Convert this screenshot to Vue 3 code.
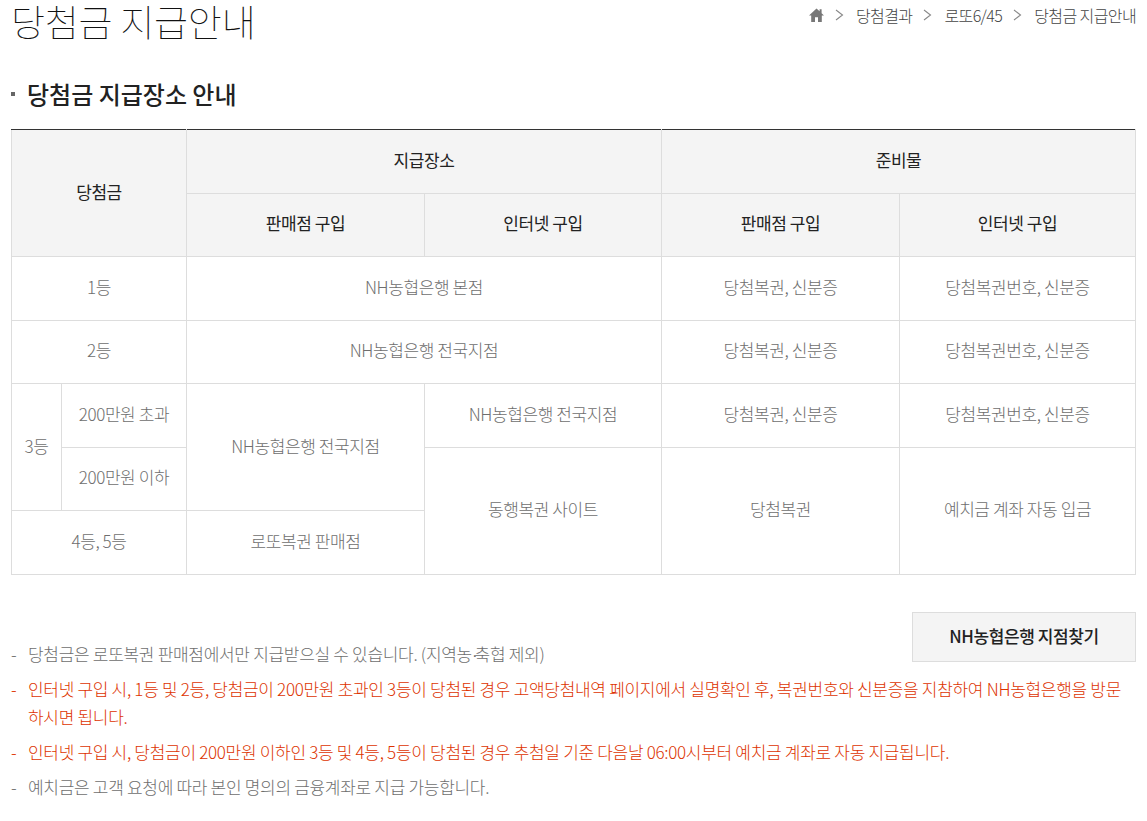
<script setup>
const notes = [
  { text: '당첨금은 로또복권 판매점에서만 지급받으실 수 있습니다. (지역농', tail: '축협 제외)' },
  { text: '인터넷 구입 시, 1등 및 2등, 당첨금이 200만원 초과인 3등이 당첨된 경우 고액당첨내역 페이지에서 실명확인 후, 복권번호와 신분증을 지참하여 NH농협은행을 방문하시면 됩니다.', red: true },
  { text: '인터넷 구입 시, 당첨금이 200만원 이하인 3등 및 4등, 5등이 당첨된 경우 추첨일 기준 다음날 06:00시부터 예치금 계좌로 자동 지급됩니다.', red: true },
  { text: '예치금은 고객 요청에 따라 본인 명의의 금융계좌로 지급 가능합니다.' },
]
</script>

<template>
  <div class="page">
    <header class="head">
      <h2 class="title">당첨금 지급안내</h2>
      <nav class="crumbs">
        <svg class="home" width="15" height="14" viewBox="0 0 15 14"><path d="M7.5 0.5 0 7.5h2.2V14h3.8V9.2h3V14h3.8V7.5H15L12.6 5.2V1.2h-2v2.1z" fill="#777"/></svg>
        <svg class="chev" width="9" height="12" viewBox="0 0 9 12"><path d="M1 1l6.5 5L1 11" fill="none" stroke="#888" stroke-width="1.1"/></svg>
        <span>당첨결과</span>
        <svg class="chev" width="9" height="12" viewBox="0 0 9 12"><path d="M1 1l6.5 5L1 11" fill="none" stroke="#888" stroke-width="1.1"/></svg>
        <span>로또6/45</span>
        <svg class="chev" width="9" height="12" viewBox="0 0 9 12"><path d="M1 1l6.5 5L1 11" fill="none" stroke="#888" stroke-width="1.1"/></svg>
        <span>당첨금 지급안내</span>
      </nav>
    </header>

    <h3 class="sub"><i class="dot"></i>당첨금 지급장소 안내</h3>

    <table class="tbl">
      <colgroup>
        <col style="width:50px" /><col style="width:125px" /><col style="width:238px" /><col style="width:237px" /><col style="width:238px" /><col />
      </colgroup>
      <thead>
        <tr><th colspan="2" rowspan="2">당첨금</th><th colspan="2">지급장소</th><th colspan="2">준비물</th></tr>
        <tr><th>판매점 구입</th><th>인터넷 구입</th><th>판매점 구입</th><th>인터넷 구입</th></tr>
      </thead>
      <tbody>
        <tr><td colspan="2">1등</td><td colspan="2">NH농협은행 본점</td><td>당첨복권, 신분증</td><td>당첨복권번호, 신분증</td></tr>
        <tr><td colspan="2">2등</td><td colspan="2">NH농협은행 전국지점</td><td>당첨복권, 신분증</td><td>당첨복권번호, 신분증</td></tr>
        <tr><td rowspan="2">3등</td><td>200만원 초과</td><td rowspan="2">NH농협은행 전국지점</td><td>NH농협은행 전국지점</td><td>당첨복권, 신분증</td><td>당첨복권번호, 신분증</td></tr>
        <tr><td>200만원 이하</td><td rowspan="2">동행복권 사이트</td><td rowspan="2">당첨복권</td><td rowspan="2">예치금 계좌 자동 입금</td></tr>
        <tr><td colspan="2">4등, 5등</td><td>로또복권 판매점</td></tr>
      </tbody>
    </table>

    <div class="bottom">
      <a class="btn">NH농협은행 지점찾기</a>
      <ul class="notes">
        <li v-for="n in notes" :key="n.text" :class="{ red: n.red }">{{ n.text }}<span v-if="n.tail" class="mid">·</span>{{ n.tail }}</li>
      </ul>
    </div>
  </div>
</template>

<style>
html, body { background: #fff; }
</style>

<style scoped>
.page {
  width: 1125px;
  margin-left: 11px;
  font-family: "Noto Sans CJK KR", "Noto Sans", sans-serif;
  font-size: 17px;
  font-weight: 300;
  letter-spacing: -0.4px;
  color: #6e6e6e;
}
.head { display: flex; justify-content: space-between; align-items: flex-start; height: 48px; }
.title {
  margin: 0;
  font-size: 37px;
  line-height: 42px;
  font-weight: 100;
  letter-spacing: -0.25px;
  color: #111;
}
.crumbs {
  display: flex;
  align-items: center;
  height: 30px;
  font-size: 16px;
  color: #444;
  letter-spacing: -0.6px;
  font-weight: 300;
}
.home { margin-right: 11px; }
.chev { margin-right: 12px; }
.crumbs span + .chev { margin-left: 11px; }
.sub {
  display: flex;
  align-items: center;
  margin: 28px 0 0;
  height: 36px;
  font-size: 24px;
  line-height: 36px;
  font-weight: 500;
  letter-spacing: 0;
  color: #222;
}
.dot { width: 4px; height: 4px; background: #666; margin-right: 12px; }
.tbl {
  width: 1125px;
  margin-top: 17px;
  border-collapse: collapse;
  table-layout: fixed;
  border-top: 1px solid #333;
}
.tbl th, .tbl td {
  border: 1px solid #ddd;
  padding: 0 0 3px;
  text-align: center;
  height: 59.5px;
  line-height: 24px;
}
.tbl thead tr:first-child th { border-top: 1px solid #333; }
.tbl th {
  background: #f4f4f4;
  font-weight: 400;
  color: #222;
}
.bottom { margin-top: 37px; }
.btn {
  float: right;
  box-sizing: border-box;
  width: 224px;
  height: 50px;
  line-height: 46px;
  text-align: center;
  background: #f4f4f4;
  border: 1px solid #ddd;
  font-weight: 500;
  color: #222;
}
.notes { list-style: none; margin: 0; padding: 28px 0 0; letter-spacing: -0.3px; }
.notes li {
  position: relative;
  padding-left: 17px;
  line-height: 28px;
  margin-bottom: 7px;
}
.notes li::before {
  content: "-";
  position: absolute;
  left: 0;
  top: 0;
}
.notes li.red { color: #dd3300; }
.mid { font-family: "Liberation Sans", sans-serif; letter-spacing: -3px; line-height: 0; padding-right: 0; }
</style>
